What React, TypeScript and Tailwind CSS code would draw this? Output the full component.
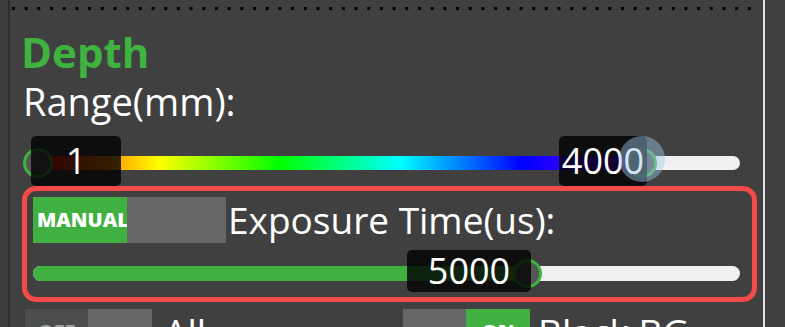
import React from 'react';

const font = "font-['Segoe_UI','Open_Sans',sans-serif]";

function Toggle({ on, left, right }: { on: boolean; left: string; right: string }) {
  return (
    <div className="flex h-[46px] shrink-0">
      <div className={`w-[63px] flex items-center justify-center text-[20px] font-extrabold ${on ? 'bg-[#666666] text-transparent' : 'bg-[#4b4e4b] text-[#a0a0a0]'}`}>
        {left}
      </div>
      <div className={`w-[64px] flex items-center justify-center text-[20px] font-extrabold ${on ? 'bg-[#40b040] text-white' : 'bg-[#666666] text-transparent'}`}>
        {right}
      </div>
    </div>
  );
}

export default function App() {
  return (
    <div className={`w-[785px] h-[327px] bg-[#404040] flex overflow-hidden ${font}`}>
      {/* left edge */}
      <div className="w-[8px] bg-[#3b3b3b]" />
      <div className="w-[2px] bg-[#2c2c2c]" />

      {/* panel */}
      <div className="w-[753px] flex flex-col [&>*]:shrink-0">
        <div className="ml-[2px] mt-[7px] h-[3px] w-[742px] bg-[linear-gradient(to_right,#000_3px,transparent_3px)] bg-[length:12.7px_3px]" />

        <h2 className="ml-[11px] mt-[17px] h-[50px] text-[42px] leading-[50px] font-bold text-[#3fb33f]">Depth</h2>
        <div className="ml-[13px] mt-[2px] h-[44px] text-[38px] leading-[44px] text-white">Range(mm):</div>

        {/* range slider */}
        <div className="relative ml-[16px] mt-[15px] h-[50px] w-[714px]">
          <div className="absolute left-0 top-[18px] h-[14px] w-[714px] rounded-full bg-[#f0f0f0]" />
          <div className="absolute left-[12px] top-[18px] h-[14px] w-[604px] bg-[linear-gradient(to_right,#ff0000_0%,#ffff00_20%,#00ff00_40%,#00ffff_60%,#0000ff_80%,#8000ff_100%)]" />
          <div className="absolute left-0 top-[18px] h-[14px] w-[14px] rounded-l-full bg-[#ff0000]" />
          {/* thumbs */}
          <div className="absolute left-[-3px] top-[10px] h-[30px] w-[30px] rounded-full border-[3px] border-[#3fb33f] bg-[#555555]" />
          <div className="absolute left-[601px] top-[10px] h-[30px] w-[30px] rounded-full border-[3px] border-[#3fb33f] bg-[#555555]" />
          {/* value labels */}
          <div className="absolute left-[5px] top-[-2px] h-[50px] w-[90px] rounded-[5px] bg-black/80 flex items-center justify-center text-[36px] text-white">1</div>
          <div className="absolute left-[533px] top-[-2px] h-[50px] w-[88px] rounded-[5px] bg-black/80 flex items-center justify-center text-[36px] text-white">4000</div>
          <div className="absolute left-[593px] top-[-2px] h-[46px] w-[46px] rounded-full bg-[#9cc8ec]/45" />
        </div>

        {/* exposure box */}
        <div className="ml-[12px] mt-[-2px] h-[116px] w-[735px] rounded-[14px] border-[5px] border-[#f24a46] flex flex-col pl-[6px] pt-[6px]">
          <div className="flex items-center">
            <div className="flex h-[46px]">
              <div className="w-[94px] bg-[#40b040] flex items-center pl-[4px] text-[20px] font-extrabold text-white">MANUAL</div>
              <div className="w-[99px] bg-[#666666]" />
            </div>
            <span className="ml-[2px] text-[37px] leading-[46px] text-white">Exposure Time(us):</span>
          </div>
          <div className="relative mt-[7px] h-[42px] w-[707px]">
            <div className="absolute left-0 top-[16px] h-[15px] w-[707px] rounded-full bg-[#f0f0f0]" />
            <div className="absolute left-0 top-[16px] h-[15px] w-[496px] rounded-l-full bg-[#40b040]" />
            <div className="absolute left-[480px] top-[9px] h-[29px] w-[29px] rounded-full border-[3px] border-[#3fb33f] bg-[#555555]" />
            <div className="absolute left-[374px] top-0 h-[42px] w-[124px] rounded-[5px] bg-black/80 flex items-center justify-center text-[36px] text-white">5000</div>
          </div>
        </div>

        {/* bottom toggles */}
        <div className="mt-[7px] flex items-start">
          <div className="ml-[15px] w-[378px] flex items-center">
            <Toggle on={false} left="OFF" right="" />
            <span className="ml-[12px] text-[37px] leading-[46px] text-white">All</span>
          </div>
          <div className="flex items-center">
            <Toggle on={true} left="" right="ON" />
            <span className="ml-[8px] text-[37px] leading-[46px] text-white">Black BG</span>
          </div>
        </div>
      </div>

      {/* right edge */}
      <div className="w-[2px] bg-[#e4e4e4]" />
      <div className="flex-1 bg-[#404040]" />
    </div>
  );
}
